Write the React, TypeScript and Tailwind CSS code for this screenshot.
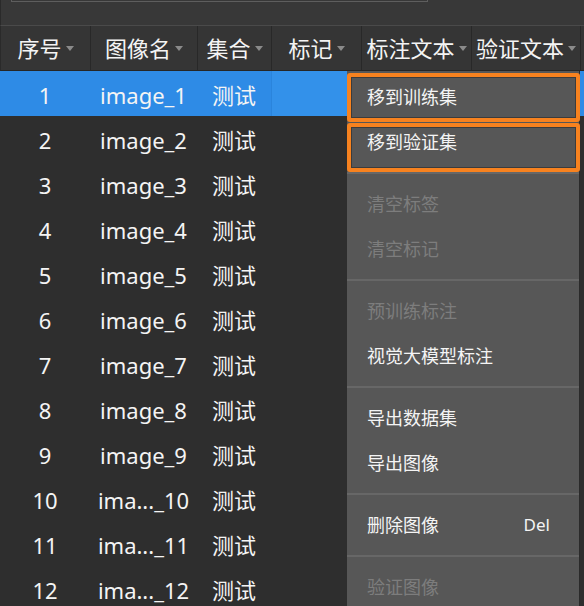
import React from "react";

const cols = [
  { key: "序号", w: 90 },
  { key: "图像名", w: 107 },
  { key: "集合", w: 74 },
  { key: "标记", w: 90 },
  { key: "标注文本", w: 110 },
  { key: "验证文本", w: 109 },
];

const rows = Array.from({ length: 12 }, (_, i) => {
  const n = i + 1;
  return { n, name: n >= 10 ? `ima..._${n}` : `image_${n}` };
});

type Item = { type: "item"; label: string; disabled?: boolean; shortcut?: string } | { type: "sep" };

const menu: Item[] = [
  { type: "item", label: "移到训练集" },
  { type: "item", label: "移到验证集" },
  { type: "sep" },
  { type: "item", label: "清空标签", disabled: true },
  { type: "item", label: "清空标记", disabled: true },
  { type: "sep" },
  { type: "item", label: "预训练标注", disabled: true },
  { type: "item", label: "视觉大模型标注" },
  { type: "sep" },
  { type: "item", label: "导出数据集" },
  { type: "item", label: "导出图像" },
  { type: "sep" },
  { type: "item", label: "删除图像", shortcut: "Del" },
  { type: "sep" },
  { type: "item", label: "验证图像", disabled: true },
];

function Arrow() {
  return (
    <svg width="8" height="5" viewBox="0 0 8 5" className="ml-[4px] mt-[2px]">
      <polygon points="0,0 8,0 4,5" fill="#8a8a8a" />
    </svg>
  );
}

export default function App() {
  return (
    <div
      className="relative w-[584px] h-[606px] overflow-hidden bg-[#2e2e2e] text-[#f4f4f4]"
      style={{ fontFamily: '"Noto Sans", "Noto Sans CJK SC", sans-serif' }}
    >
      {/* top area */}
      <div className="h-[25px] bg-[#383838] border-l border-[#2a2a2a]">
        <div className="ml-[10px] w-[417px] h-[2px] border-l border-r border-b border-[#5e5e5e]" />
      </div>

      {/* header */}
      <div className="flex h-[46px] bg-[#353535] border-t border-[#4a4a4a] border-b border-b-[#262626] border-l border-l-[#2a2a2a]">
        {cols.map((c) => (
          <div
            key={c.key}
            className="flex items-center justify-center border-r border-[#282828] text-[22px] leading-none shrink-0 pb-[1px]"
            style={{ width: c.w }}
          >
            <span>{c.key}</span>
            <Arrow />
          </div>
        ))}
        <div className="flex-1" />
      </div>

      {/* rows */}
      <div>
        {rows.map((r) => {
          const sel = r.n === 1;
          return (
            <div
              key={r.n}
              className={`flex h-[45px] text-[22px] leading-none ${sel ? "bg-[#2e8be6]" : ""}`}
            >
              <div className="w-[90px] flex items-center justify-center pt-[3px]">{r.n}</div>
              <div className="w-[107px] flex items-center justify-center pt-[3px]">{r.name}</div>
              <div className="w-[74px] flex items-center justify-center pt-[3px]">测试</div>
              <div className={`w-[90px] ${sel ? "bg-[#3391ea] border-l border-[#2a84dc]" : ""}`} />
              <div className="flex-1" />
            </div>
          );
        })}
      </div>

      {/* context menu */}
      <div className="absolute left-[347px] top-[71px] w-[233px] h-[540px] bg-[#575757] border-r border-[#2a2a2a] pt-[5px]">
        {menu.map((m, i) =>
          m.type === "sep" ? (
            <div key={i} className="h-[17px] pt-[6px]">
              <div className="h-[2px] bg-[#676767]" />
            </div>
          ) : (
            <div
              key={i}
              className={`h-[45px] flex items-center justify-between pl-[20px] pr-[29px] pb-[4px] text-[18px] leading-none ${
                m.disabled ? "text-[#7d7d7d]" : "text-[#f4f4f4]"
              }`}
            >
              <span>{m.label}</span>
              {m.shortcut && <span className="text-[17px]">{m.shortcut}</span>}
            </div>
          )
        )}

        {/* annotation boxes */}
        <div className="absolute left-0 top-[2px] w-[233px] h-[49px] rounded-[3px] border-[4px] border-[#f7821f]">
          <div className="w-full h-full border border-[#3c3c3c]" />
        </div>
        <div className="absolute left-0 top-[52px] w-[233px] h-[49px] rounded-[3px] border-[4px] border-[#f7821f]">
          <div className="w-full h-full border border-[#3c3c3c]" />
        </div>
      </div>
    </div>
  );
}
